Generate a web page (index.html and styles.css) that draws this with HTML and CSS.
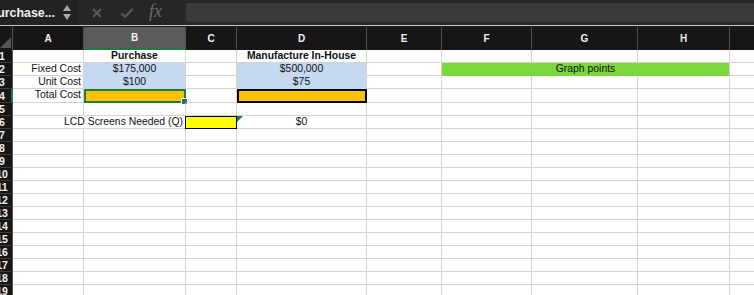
FILE: index.html
```html
<!DOCTYPE html>
<html lang="en">

<head>
    <meta charset="UTF-8">
    <title>Purchase</title>
    <link rel="stylesheet" href="styles.css">
</head>

<body>
    <div class="toolbar">
        <div class="namebox">
            <span class="name"><span>Purchase...</span></span>
            <span class="stepper"><i class="up"></i><i class="down"></i></span>
        </div>
        <div class="actions">
            <svg class="icon" width="12" height="12" viewBox="0 0 12 12"><path d="M2 2 L10 10 M10 2 L2 10" stroke="#595959" stroke-width="2" fill="none"/></svg>
            <svg class="icon" width="14" height="12" viewBox="0 0 14 12"><path d="M1.5 6.5 L5 10 L12.5 2" stroke="#595959" stroke-width="2" fill="none"/></svg>
            <span class="fx">fx</span>
        </div>
        <div class="formula"></div>
    </div>

    <div class="sheet">
        <!-- column headers -->
        <div class="corner"></div>
        <div class="colhdr">A</div>
        <div class="colhdr active">B</div>
        <div class="colhdr">C</div>
        <div class="colhdr">D</div>
        <div class="colhdr">E</div>
        <div class="colhdr">F</div>
        <div class="colhdr">G</div>
        <div class="colhdr">H</div>
        <div class="colhdr"></div>

        <!-- row 1 -->
        <div class="rowhdr"><span>1</span></div>
        <div class="cell"></div>
        <div class="cell bold center">Purchase</div>
        <div class="cell"></div>
        <div class="cell bold center">Manufacture In-House</div>
        <div class="cell"></div><div class="cell"></div><div class="cell"></div><div class="cell"></div><div class="cell"></div>

        <!-- row 2 -->
        <div class="rowhdr"><span>2</span></div>
        <div class="cell right">Fixed Cost</div>
        <div class="cell blue center">$175,000</div>
        <div class="cell"></div>
        <div class="cell blue center">$500,000</div>
        <div class="cell"></div>
        <div class="cell green center span3">Graph points</div>
        <div class="cell"></div>

        <!-- row 3 -->
        <div class="rowhdr"><span>3</span></div>
        <div class="cell right">Unit Cost</div>
        <div class="cell blue center">$100</div>
        <div class="cell"></div>
        <div class="cell blue center">$75</div>
        <div class="cell"></div><div class="cell"></div><div class="cell"></div><div class="cell"></div><div class="cell"></div>

        <!-- row 4 -->
        <div class="rowhdr active"><span>4</span></div>
        <div class="cell right">Total Cost</div>
        <div class="cell orange selected"><span class="handle"></span></div>
        <div class="cell"></div>
        <div class="cell orange boxed"></div>
        <div class="cell"></div><div class="cell"></div><div class="cell"></div><div class="cell"></div><div class="cell"></div>

        <!-- row 5 -->
        <div class="rowhdr"><span>5</span></div>
        <div class="cell"></div><div class="cell"></div><div class="cell"></div><div class="cell"></div>
        <div class="cell"></div><div class="cell"></div><div class="cell"></div><div class="cell"></div><div class="cell"></div>

        <!-- row 6 -->
        <div class="rowhdr"><span>6</span></div>
        <div class="cell right span2">LCD Screens Needed (Q)</div>
        <div class="cell yellow"></div>
        <div class="cell center note">$0</div>
        <div class="cell"></div><div class="cell"></div><div class="cell"></div><div class="cell"></div><div class="cell"></div>
    </div>

    <script>
        // empty rows 7 - 19
        const sheet = document.querySelector('.sheet');
        for (let r = 7; r <= 19; r++) {
            const hdr = document.createElement('div');
            hdr.className = 'rowhdr';
            hdr.innerHTML = '<span>' + r + '</span>';
            sheet.appendChild(hdr);
            for (let c = 0; c < 9; c++) {
                const cell = document.createElement('div');
                cell.className = 'cell';
                sheet.appendChild(cell);
            }
        }
    </script>
</body>

</html>
```

FILE: styles.css
```css
body {
    margin: 0;
    background: #fff;
    font-family: "Liberation Sans", Arial, sans-serif;
    overflow: hidden;
}

.toolbar {
    display: flex;
    height: 25px;
    background: #262626;
    border-bottom: 1px solid #c4c4c4;
}

.namebox {
    width: 76px;
    display: flex;
    align-items: center;
    background: #222;
    border-right: 1px solid #1b1b1b;
}

.name {
    width: 55px;
    display: flex;
    justify-content: flex-end;
    overflow: hidden;
    white-space: nowrap;
    color: #f2f2f2;
    font-size: 12.4px;
    font-weight: bold;
}

.name span {
    flex-shrink: 0;
}

.stepper {
    display: flex;
    flex-direction: column;
    gap: 3px;
    margin-left: 8px;
}

.stepper i {
    width: 0;
    height: 0;
    border-left: 4px solid transparent;
    border-right: 4px solid transparent;
}

.stepper .up {
    border-bottom: 6px solid #a6a6a6;
}

.stepper .down {
    border-top: 6px solid #a6a6a6;
}

.actions {
    display: flex;
    align-items: center;
    width: 95px;
    padding-left: 14px;
    gap: 17px;
}

.fx {
    font-family: "Liberation Serif", serif;
    font-style: italic;
    font-size: 18px;
    color: #6e6e6e;
    margin-left: -2px;
    margin-top: -2px;
}

.formula {
    flex: 1;
    margin: 3px 0 3px 0;
    background: #3a3a3a;
    border-radius: 3px 0 0 3px;
}

.sheet {
    display: grid;
    grid-template-columns: 13px 71px 102px 51px 130px 75px 90px 106px 92px 30px;
    grid-template-rows: 23px 13px 13px 13px 14px;
    grid-auto-rows: 13px;
    font-size: 10.4px;
    color: #111;
    border-top: 1px solid #1a1a1a;
}

.corner {
    background: #161616;
    border-right: 1px solid #555;
    position: relative;
}

.corner::after {
    content: "";
    position: absolute;
    right: 1px;
    bottom: 2px;
    border-left: 11px solid transparent;
    border-bottom: 11px solid #555;
}

.colhdr {
    background: #161616;
    color: #f0f0f0;
    font-weight: bold;
    font-size: 10px;
    display: flex;
    align-items: center;
    justify-content: center;
    border-right: 1px solid #4f4f4f;
    border-bottom: 1px solid #161616;
}

.colhdr.active {
    background: #5b5b5b;
    border-bottom: 2px solid #1d7a45;
}

.rowhdr {
    background: #161616;
    color: #f0f0f0;
    font-weight: bold;
    font-size: 10.5px;
    display: flex;
    align-items: center;
    overflow: hidden;
    white-space: nowrap;
    border-bottom: 1px solid #3a3a3a;
    border-right: 1px solid #555;
    box-sizing: border-box;
}

/* row numbers sit in a wider column scrolled off to the left */
.rowhdr span {
    flex-shrink: 0;
    width: 20px;
    margin-left: -8px;
    text-align: center;
}

.rowhdr.active {
    border-right: 2px solid #1d7a45;
}

.cell {
    box-sizing: border-box;
    border-right: 1px solid #d4d4d4;
    border-bottom: 1px solid #d4d4d4;
    white-space: nowrap;
    line-height: 12px;
    padding: 0 2px;
    position: relative;
}

.bold {
    font-weight: bold;
}

.center {
    text-align: center;
}

.right {
    text-align: right;
}

.span2 {
    grid-column: span 2;
}

.span3 {
    grid-column: span 3;
}

.blue {
    background: #c5d9f1;
    border-bottom-color: #c5d9f1;
}

.green {
    background: #7bd83b;
    border-color: #7bd83b;
    border-right-color: #d4d4d4;
}

.orange {
    background: #ffc000;
}

.selected {
    border: 2px solid #1d7a45;
}

.handle {
    position: absolute;
    right: -4px;
    bottom: -4px;
    width: 5px;
    height: 5px;
    background: #1d7a45;
    border: 1px solid #fff;
}

.boxed {
    border: 2px solid #000;
}

.yellow {
    background: #ffff00;
    border: 1px solid #000;
    margin-left: -1px;
}

.note::before {
    content: "";
    position: absolute;
    left: 0;
    top: 0;
    border-top: 6px solid #1d7a45;
    border-right: 6px solid transparent;
}
```
